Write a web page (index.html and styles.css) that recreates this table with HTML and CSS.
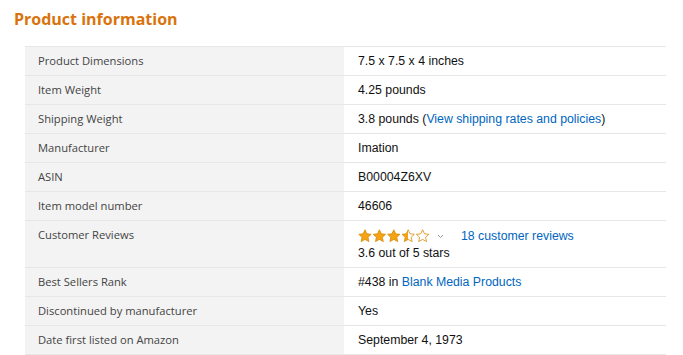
FILE: index.html
```html
<!DOCTYPE html>
<html>
<head>
<meta charset="utf-8">
<link rel="stylesheet" href="styles.css">
</head>
<body>
<div class="page">
  <h2 class="title">Product information</h2>
  <table class="info">
    <tr><th>Product Dimensions</th><td>7.5 x 7.5 x 4 inches</td></tr>
    <tr><th>Item Weight</th><td>4.25 pounds</td></tr>
    <tr><th>Shipping Weight</th><td>3.8 pounds (<a href="#">View shipping rates and policies</a>)</td></tr>
    <tr><th>Manufacturer</th><td>Imation</td></tr>
    <tr><th>ASIN</th><td>B00004Z6XV</td></tr>
    <tr><th>Item model number</th><td>46606</td></tr>
    <tr class="reviews"><th>Customer Reviews</th><td>
      <div class="rating-line">
        <span class="stars">
          <svg width="72" height="14" viewBox="0 0 72 14">
            <defs>
              <linearGradient id="half" x1="0" x2="1" y1="0" y2="0">
                <stop offset="0.5" stop-color="#f4a412"/>
                <stop offset="0.5" stop-color="#ffffff"/>
              </linearGradient>
              <path id="st" d="M7 0.8 L8.9 4.8 L13.2 5.3 L10 8.3 L10.9 12.6 L7 10.4 L3.1 12.6 L4 8.3 L0.8 5.3 L5.1 4.8 Z"/>
            </defs>
            <use href="#st" x="0" fill="#f4a412" stroke="#d78a0a" stroke-width="0.8"/>
            <use href="#st" x="14.4" fill="#f4a412" stroke="#d78a0a" stroke-width="0.8"/>
            <use href="#st" x="28.8" fill="#f4a412" stroke="#d78a0a" stroke-width="0.8"/>
            <use href="#st" x="43.2" fill="url(#half)" stroke="#d78a0a" stroke-width="0.8"/>
            <use href="#st" x="57.6" fill="#ffffff" stroke="#d78a0a" stroke-width="0.8"/>
          </svg>
        </span>
        <svg class="caret" width="7" height="5" viewBox="0 0 7 5"><path d="M1 1 L3.5 3.5 L6 1" fill="none" stroke="#999" stroke-width="1"/></svg>
        <a href="#" class="count">18 customer reviews</a>
      </div>
      <div class="outof">3.6 out of 5 stars</div>
    </td></tr>
    <tr><th>Best Sellers Rank</th><td>#438 in <a href="#">Blank Media Products</a></td></tr>
    <tr><th>Discontinued by manufacturer</th><td>Yes</td></tr>
    <tr><th>Date first listed on Amazon</th><td>September 4, 1973</td></tr>
  </table>
</div>
</body>
</html>
```

FILE: styles.css
```css
html, body {
  margin: 0;
  padding: 0;
  background: #ffffff;
}
.page {
  padding: 8px 17px 0 14px;
}
.title {
  margin: 0 0 16px 0;
  font-family: "Open Sans", sans-serif;
  font-weight: 700;
  font-size: 16px;
  line-height: 22px;
  color: #d9730d;
}
.info {
  margin-left: 11px;
  width: 641px;
  border-collapse: collapse;
  border-top: 1px solid #e7e7e7;
}
.info tr {
  border-bottom: 1px solid #e7e7e7;
}
.info th {
  width: 293px;
  background: #f3f3f3;
  text-align: left;
  vertical-align: top;
  font-family: "Open Sans", sans-serif;
  font-weight: 400;
  font-size: 11.2px;
  color: #444444;
  padding: 6px 13px 7px 13px;
  line-height: 15px;
}
.info td {
  vertical-align: top;
  font-family: "Liberation Sans", Arial, sans-serif;
  font-size: 12.3px;
  color: #111111;
  padding: 7px 13px 6px 14px;
  line-height: 15px;
}
.info a {
  color: #0066c0;
  text-decoration: none;
}
.rating-line {
  display: flex;
  align-items: center;
  height: 16px;
}
.stars {
  display: flex;
  margin-right: 7px;
}
.caret {
  margin-right: 17px;
}
.outof {
  margin-top: 2px;
  line-height: 15px;
}
```
